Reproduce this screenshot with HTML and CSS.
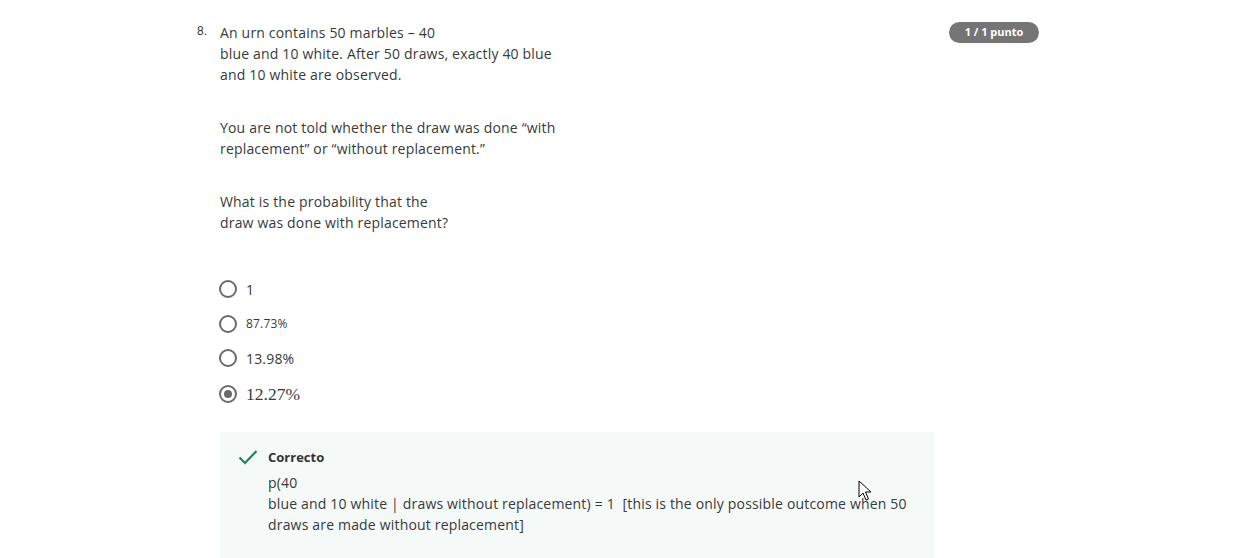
FILE: index.html
```html
<!DOCTYPE html>
<html lang="es">
<head>
<meta charset="utf-8">
<title>Pregunta 8</title>
<link rel="stylesheet" href="styles.css">
</head>
<body>
<main class="page">
  <section class="question">
    <div class="q-head">
      <span class="q-num">8.</span>
      <div class="q-body">
        <p class="q-text">An urn contains 50 marbles – 40<br>blue and 10 white. After 50 draws, exactly 40 blue<br>and 10 white are observed.</p>
        <p class="q-text">You are not told whether the draw was done “with<br>replacement” or “without replacement.”</p>
        <p class="q-text">What is the probability that the<br>draw was done with replacement?</p>
      </div>
      <span class="badge">1 / 1 punto</span>
    </div>

    <ul class="options">
      <li class="option"><span class="radio"></span><span class="opt-label">1</span></li>
      <li class="option"><span class="radio"></span><span class="opt-label small">87.73%</span></li>
      <li class="option"><span class="radio"></span><span class="opt-label">13.98%</span></li>
      <li class="option"><span class="radio checked"></span><span class="opt-label math">12.27%</span></li>
    </ul>

    <div class="feedback">
      <svg class="check" width="20" height="16" viewBox="0 0 20 16" aria-hidden="true">
        <path d="M1.5 8.5 L7 14 L18.5 2" fill="none" stroke="#1f8354" stroke-width="2.2"/>
      </svg>
      <div class="fb-content">
        <div class="fb-title">Correcto</div>
        <p class="fb-text">p(40<br>blue and 10 white | draws without replacement) = 1&nbsp; [this is the only possible outcome when 50<br>draws are made without replacement]</p>
      </div>
    </div>
  </section>
  <svg class="cursor" width="14" height="22" viewBox="0 0 14 22" aria-hidden="true">
    <path d="M1 1 L1 17 L5 13 L8 20 L10.5 19 L7.5 12 L13 12 Z" fill="#fff" stroke="#000" stroke-width="1"/>
  </svg>
</main>
</body>
</html>
```

FILE: styles.css
```css
* { box-sizing: border-box; }
html, body { margin: 0; padding: 0; background: #fff; }
body {
  font-family: "Open Sans", "Noto Sans", "Liberation Sans", sans-serif;
  color: #373a3c;
  font-size: 14px;
  line-height: 21px;
  letter-spacing: 0.18px;
}
.page {
  position: relative;
  width: 1246px;
  height: 558px;
  overflow: hidden;
  padding: 22px 0 0 197px;
}
.question { width: 842px; }
.q-head { display: flex; align-items: flex-start; }
.q-num {
  width: 23px;
  font-family: "Liberation Sans", Arial, sans-serif;
  font-size: 12px;
  line-height: 18px;
  letter-spacing: 0;
  color: #333;
}
.q-body { width: 370px; }
.q-text { margin: 0 0 32px; }
.q-text:last-child { margin-bottom: 0; }
.badge {
  margin-left: auto;
  margin-top: 0;
  width: 90px;
  height: 21px;
  border-radius: 11px;
  background: #757575;
  color: #fff;
  font-size: 11px;
  font-weight: 700;
  line-height: 20px;
  letter-spacing: 0;
  text-align: center;
}
.options {
  list-style: none;
  margin: 39px 0 0 22px;
  padding: 0;
}
.option {
  display: flex;
  align-items: center;
  height: 34.5px;
}
.radio {
  width: 18px;
  height: 18px;
  border: 2px solid #6b6b6b;
  border-radius: 50%;
  margin-right: 9px;
  display: flex;
  align-items: center;
  justify-content: center;
}
.radio.checked::after {
  content: "";
  width: 8px;
  height: 8px;
  border-radius: 50%;
  background: #6b6b6b;
}
.opt-label { font-size: 14px; color: #373a3c; }
.opt-label.small { font-size: 12px; }
.option:last-child { padding-top: 3px; }
.opt-label.math {
  font-family: "Liberation Serif", "DejaVu Serif", serif;
  font-size: 17.5px;
  letter-spacing: 0;
}
.feedback {
  margin: 22px 0 0 23px;
  width: 715px;
  height: 140px;
  background: #f5f9f8;
  display: flex;
  align-items: flex-start;
  padding: 16px 20px 0 18px;
}
.check { margin-top: 1px; margin-right: 10px; flex: none; }
.fb-content { flex: 1; }
.fb-title {
  font-size: 13px;
  font-weight: 700;
  line-height: 18px;
  letter-spacing: 0;
  color: #333;
}
.fb-text { margin: 6px 0 0; }
.cursor { position: absolute; left: 858px; top: 480px; }
```
